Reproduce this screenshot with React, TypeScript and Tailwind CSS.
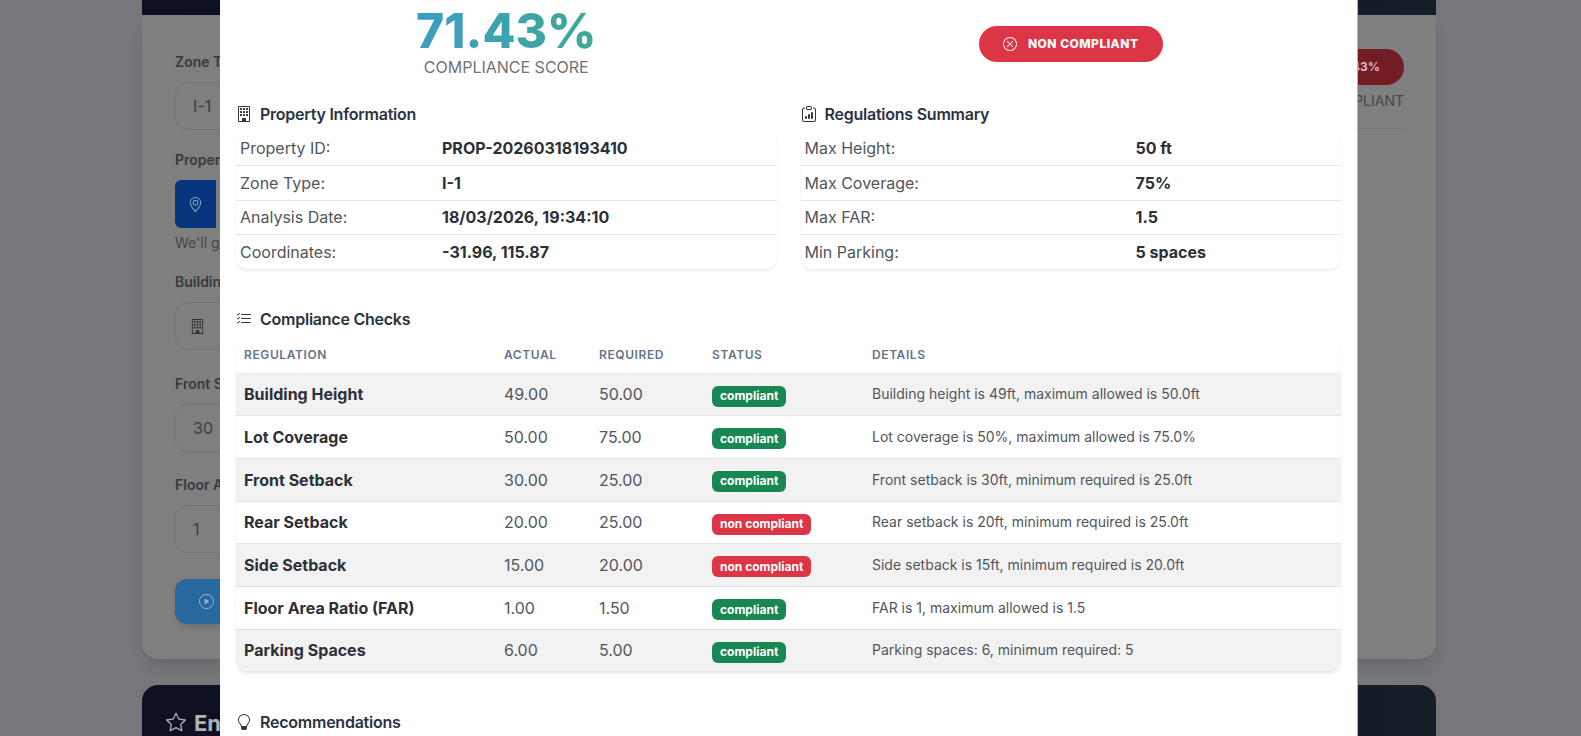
import { BsBuilding, BsClipboardData, BsGeoAlt, BsLightbulb, BsListCheck, BsPlayCircle, BsStar, BsXCircle } from 'react-icons/bs'

const property = [
  ['Property ID:', 'PROP-20260318193410'],
  ['Zone Type:', 'I-1'],
  ['Analysis Date:', '18/03/2026, 19:34:10'],
  ['Coordinates:', '-31.96, 115.87'],
]

const regulations = [
  ['Max Height:', '50 ft'],
  ['Max Coverage:', '75%'],
  ['Max FAR:', '1.5'],
  ['Min Parking:', '5 spaces'],
]

const checks = [
  { name: 'Building Height', actual: '49.00', required: '50.00', ok: true, details: 'Building height is 49ft, maximum allowed is 50.0ft' },
  { name: 'Lot Coverage', actual: '50.00', required: '75.00', ok: true, details: 'Lot coverage is 50%, maximum allowed is 75.0%' },
  { name: 'Front Setback', actual: '30.00', required: '25.00', ok: true, details: 'Front setback is 30ft, minimum required is 25.0ft' },
  { name: 'Rear Setback', actual: '20.00', required: '25.00', ok: false, details: 'Rear setback is 20ft, minimum required is 25.0ft' },
  { name: 'Side Setback', actual: '15.00', required: '20.00', ok: false, details: 'Side setback is 15ft, minimum required is 20.0ft' },
  { name: 'Floor Area Ratio (FAR)', actual: '1.00', required: '1.50', ok: true, details: 'FAR is 1, maximum allowed is 1.5' },
  { name: 'Parking Spaces', actual: '6.00', required: '5.00', ok: true, details: 'Parking spaces: 6, minimum required: 5' },
]

function Heading({ icon, title }: { icon: React.ReactNode; title: string }) {
  return (
    <h5 className="flex h-6 items-center gap-2 text-base font-semibold tracking-[-0.015em] text-[#2a3240]">
      <span className="flex w-4 justify-center text-base text-[#33373d]">{icon}</span>
      {title}
    </h5>
  )
}

function InfoTable({ rows, labelWidth }: { rows: string[][]; labelWidth: string }) {
  return (
    <table className="w-full table-fixed overflow-hidden rounded-xl bg-white text-base shadow-[0_2px_3px_rgba(0,0,0,0.08)]">
      <tbody>
        {rows.map(([label, value], i) => (
          <tr key={label} className={`h-[34.5px] ${i < rows.length - 1 ? 'border-b border-[#e2e4e7]' : ''}`}>
            <td className={`${labelWidth} pl-1 text-[#52565b]`}>{label}</td>
            <td className="font-bold text-[#2d3036]">{value}</td>
          </tr>
        ))}
      </tbody>
    </table>
  )
}

function BackgroundField({ label, children }: { label: string; children: React.ReactNode }) {
  return (
    <div className="flex flex-col gap-2">
      <label className="h-6 text-sm leading-6 font-semibold text-[#38393d]">{label}</label>
      {children}
    </div>
  )
}

function BackgroundInput({ value }: { value: string }) {
  return (
    <div className="flex h-12 items-center rounded-xl border border-[#747577] px-[17px] text-base text-[#3c3d40]">{value}</div>
  )
}

function BackgroundPage() {
  return (
    <div className="ml-[142px] flex w-[1294px] flex-col">
      <div className="h-[15px] bg-gradient-to-r from-[#0d1020] to-[#161c28]" />
      <div className="flex h-[644px] justify-between rounded-b-2xl bg-[#7f7f7f] pr-8 pl-[33px] shadow-lg">
        <div className="flex w-[560px] flex-col pt-[35px]">
          <BackgroundField label="Zone Type">
            <BackgroundInput value="I-1" />
          </BackgroundField>
          <div className="mt-[18px]">
            <BackgroundField label="Property Location">
              <div className="flex h-12 w-[41px] items-center justify-center rounded-l-md bg-[#06377e] text-[15px] text-[#8fa6c4]">
                <BsGeoAlt />
              </div>
            </BackgroundField>
          </div>
          <p className="mt-[5px] h-5 text-sm leading-5 text-[#45464a]">We'll geocode this address</p>
          <div className="mt-[17px]">
            <BackgroundField label="Building Height">
              <div className="flex h-12 items-center rounded-xl border border-[#747577] px-[14px] text-[15px] text-[#303134]">
                <BsBuilding />
              </div>
            </BackgroundField>
          </div>
          <div className="mt-[22px]">
            <BackgroundField label="Front Setback">
              <BackgroundInput value="30" />
            </BackgroundField>
          </div>
          <div className="mt-[21px]">
            <BackgroundField label="Floor Area Ratio">
              <BackgroundInput value="1" />
            </BackgroundField>
          </div>
          <div className="mt-[26px] flex h-[45px] items-center rounded-xl bg-[#28689e] pl-6 text-[#8db4d0] shadow-md">
            <BsPlayCircle className="text-[15px]" />
          </div>
        </div>
        <div className="flex w-[300px] flex-col items-end pt-[34px]">
          <div className="flex h-9 w-[200px] items-center justify-end rounded-full bg-[#721c23] pr-6 text-xs font-bold text-[#dbb9bc]">71.43%</div>
          <p className="mt-[6px] h-5 text-sm leading-5 text-[#454649]">NON COMPLIANT</p>
          <div className="mt-[17px] w-full border-b border-[#727272]" />
        </div>
      </div>
      <div className="mt-[26px] flex h-[80px] items-start gap-2 rounded-t-2xl bg-gradient-to-r from-[#0d1020] to-[#161c28] pt-6 pl-6 text-[#aeb0b4]">
        <BsStar className="mt-[3px] text-xl" />
        <span className="text-[22px] leading-7 font-bold">Enterprise Features</span>
      </div>
    </div>
  )
}

export default function App() {
  return (
    <div className="relative h-[736px] overflow-hidden bg-[#76777a] font-['Inter',sans-serif]">
      <BackgroundPage />

      {/* Modal, scrolled so its header is out of view */}
      <div className="absolute inset-y-0 left-[220px] w-[1138px] border-r border-black/30 bg-white px-4">
        <div className="grid grid-cols-2 gap-x-6">
          <div className="flex flex-col items-center">
            <div className="mt-px bg-gradient-to-r from-[#3d9cc2] to-[#3fa896] bg-clip-text text-5xl leading-[60px] font-extrabold text-transparent">71.43%</div>
            <div className="-mt-[6px] text-base leading-6 text-[#707274]">COMPLIANCE SCORE</div>
          </div>
          <div className="flex items-start justify-center pt-[26px]">
            <span className="flex h-9 w-[184px] items-center justify-center gap-[11px] rounded-full bg-[#dc3545] text-xs font-extrabold tracking-[0.04em] text-white">
              <BsXCircle className="text-sm" />
              NON COMPLIANT
            </span>
          </div>
        </div>

        <div className="mt-[23px] grid grid-cols-2 gap-x-6">
          <div className="flex flex-col gap-[5px]">
            <Heading icon={<BsBuilding />} title="Property Information" />
            <InfoTable rows={property} labelWidth="w-[206px]" />
          </div>
          <div className="flex flex-col gap-[5px]">
            <Heading icon={<BsClipboardData />} title="Regulations Summary" />
            <InfoTable rows={regulations} labelWidth="w-[335px]" />
          </div>
        </div>

        <div className="mt-[38px]">
          <Heading icon={<BsListCheck />} title="Compliance Checks" />
          <table className="mt-[6px] w-full table-fixed overflow-hidden rounded-xl bg-white shadow-[0_2px_3px_rgba(0,0,0,0.08)]">
            <thead>
              <tr className="h-[36px] border-b border-[#e8ecf1] text-left text-xs tracking-[0.05em] text-[#64748b] uppercase">
                <th className="w-[260px] pl-2 font-semibold">Regulation</th>
                <th className="w-[95px] pl-2 font-semibold">Actual</th>
                <th className="w-[113px] pl-2 font-semibold">Required</th>
                <th className="w-[160px] pl-2 font-semibold">Status</th>
                <th className="pl-2 font-semibold">Details</th>
              </tr>
            </thead>
            <tbody>
              {checks.map((c, i) => (
                <tr key={c.name} className={`h-[42.7px] border-b border-[#e2e4e7] ${i % 2 === 0 ? 'bg-[#f2f2f2]' : 'bg-white'}`}>
                  <td className="pl-2 text-base font-bold text-[#2d3036]">{c.name}</td>
                  <td className="pl-2 text-base text-[#52565b]">{c.actual}</td>
                  <td className="pl-2 text-base text-[#52565b]">{c.required}</td>
                  <td className="pl-2">
                    <span className={`inline-flex h-[21px] items-center rounded-md px-2 text-xs font-bold text-white ${c.ok ? 'bg-[#198754]' : 'bg-[#dc3545]'}`}>
                      {c.ok ? 'compliant' : 'non compliant'}
                    </span>
                  </td>
                  <td className="pl-2 text-sm text-[#52565b]">{c.details}</td>
                </tr>
              ))}
            </tbody>
          </table>
        </div>

        <div className="mt-[38px]">
          <Heading icon={<BsLightbulb />} title="Recommendations" />
        </div>
      </div>
    </div>
  )
}
